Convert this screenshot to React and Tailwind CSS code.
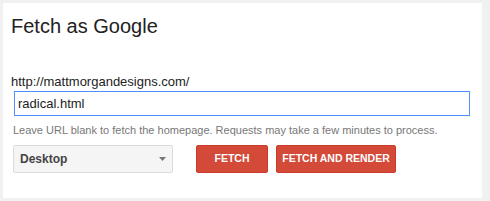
export default function App() {
  return (
    <div className="w-[490px] h-[201px] bg-[#f1f1f1] pt-[3px] pl-[3px] font-['Liberation_Sans',Arial,sans-serif]">
      <div className="w-[479px] h-[195px] bg-white pt-[11px] pl-[8px]">
        <h1 className="text-[20px] leading-[24px] text-[#222]">Fetch as Google</h1>

        <div className="mt-[36px] text-[13px] leading-[15px] text-[#222]">http://mattmorgandesigns.com/</div>

        <input
          type="text"
          defaultValue="radical.html"
          className="block ml-[3px] mt-[2px] w-[456px] h-[25px] border border-[#4d90fe] px-[3px] text-[13px] text-[#222] outline-none"
        />

        <p className="ml-[2px] mt-[7px] text-[11px] leading-[14px] text-[#777]">
          Leave URL blank to fetch the homepage. Requests may take a few minutes to process.
        </p>

        <div className="ml-[2px] mt-[8px] flex items-center">
          <div className="w-[160px] h-[28px] flex items-center justify-between border border-[#dcdcdc] bg-[#f5f5f5] rounded-[2px] pl-[6px] pr-[6px]">
            <span className="text-[12px] font-bold text-[#444]">Desktop</span>
            <svg width="7" height="4" viewBox="0 0 7 4">
              <path d="M0 0 L7 0 L3.5 4 Z" fill="#777" />
            </svg>
          </div>
          <button className="ml-[23px] w-[72px] h-[28px] bg-[#d44a38] border border-[#c93c2a] rounded-[2px] text-white text-[10.5px] font-bold">
            FETCH
          </button>
          <button className="ml-[8px] w-[120px] h-[28px] bg-[#d44a38] border border-[#c93c2a] rounded-[2px] text-white text-[10.5px] font-bold">
            FETCH AND RENDER
          </button>
        </div>
      </div>
    </div>
  );
}
